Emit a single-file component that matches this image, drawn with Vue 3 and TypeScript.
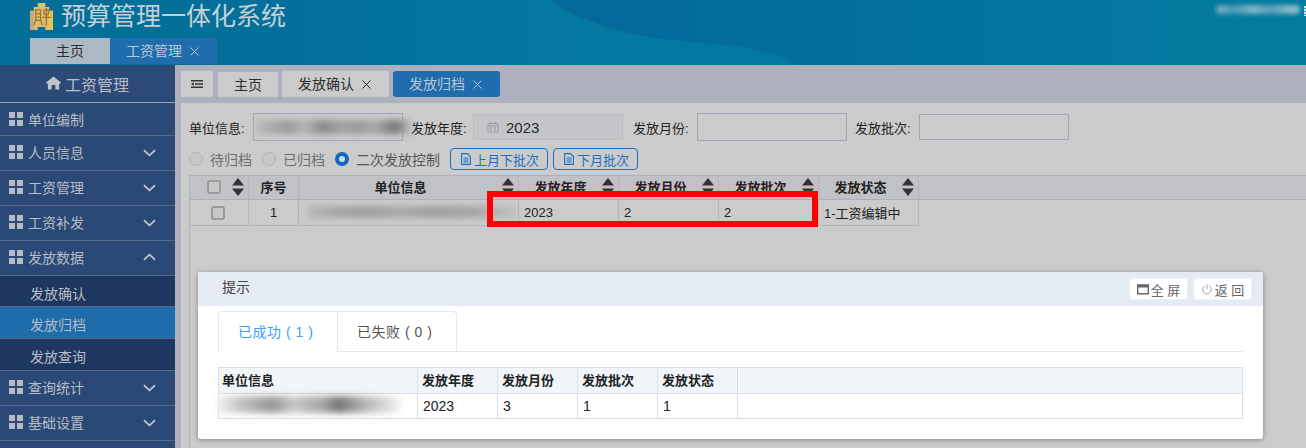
<script setup lang="ts">
const menu = [
  { label: '单位编制', kind: 'first' },
  { label: '人员信息', kind: 'down' },
  { label: '工资管理', kind: 'down' },
  { label: '工资补发', kind: 'down' },
  { label: '发放数据', kind: 'up' },
  { label: '发放确认', kind: 'sub sub1' },
  { label: '发放归档', kind: 'sub active' },
  { label: '发放查询', kind: 'sub' },
  { label: '查询统计', kind: 'down' },
  { label: '基础设置', kind: 'down' },
  { label: '', kind: 'tail' }
]
const heads = [
  { t: '单位信息', w: 220 },
  { t: '发放年度', w: 100 },
  { t: '发放月份', w: 100 },
  { t: '发放批次', w: 100 },
  { t: '发放状态', w: 100 }
]
const cells = [
  { t: '2023', w: 100 },
  { t: '2', w: 100 },
  { t: '2', w: 100 },
  { t: '1-工资编辑中', w: 100 }
]
const sub = [
  { h: '单位信息', v: '', w: 199 },
  { h: '发放年度', v: '2023', w: 80 },
  { h: '发放月份', v: '3', w: 80 },
  { h: '发放批次', v: '1', w: 80 },
  { h: '发放状态', v: '1', w: 80 }
]
</script>

<template>
  <div class="page">
    <header class="top">
      <svg class="wave" viewBox="0 0 1306 65" preserveAspectRatio="none" aria-hidden="true">
        <defs>
          <linearGradient id="dk" x1="0" x2="1" y1="0" y2="0">
            <stop offset="0" stop-color="#02689a" />
            <stop offset="1" stop-color="#047c9f" />
          </linearGradient>
        </defs>
        <path d="M550 0C590 28 640 38 700 43C745 46 775 52 795 65H1306V0Z" fill="url(#dk)" />
      </svg>
      <div class="brand">
        <svg class="logo" viewBox="0 0 24 29" aria-hidden="true">
          <path d="M0 8H4V4H8V0H16V4H20V8H24V28H16V25H8V28H0Z" fill="#d8bf72" />
          <path d="M0 8H4V28H0Z" fill="#c2ad78" />
          <path d="M19 8H24V28H19Z" fill="#e8c34e" />
          <path d="M6 7H11V18H6ZM6 11H11M6 14.500H11M6 18L4 23M11 18L13 23M17 5V24M13 15H22" fill="none" stroke="#a8702a" stroke-width="1.300" />
          <circle cx="17" cy="9.500" r="2.600" fill="none" stroke="#a8702a" stroke-width="1.300" />
        </svg>
        <h1>预算管理一体化系统</h1>
      </div>
      <div class="user-blur"></div>
      <div class="edge-mark"></div>
      <nav class="top-tabs">
        <span class="top-tab">主页</span>
        <span class="top-tab on">工资管理
          <svg class="x" viewBox="0 0 9 9" aria-hidden="true"><path d="M.5.500L8.500 8.500M8.500.500L.5 8.500" stroke="currentColor" fill="none" /></svg>
        </span>
      </nav>
    </header>

    <div class="body">
      <aside class="side">
        <div class="side-title">
          <svg class="home" viewBox="0 0 16 14" aria-hidden="true">
            <path d="M8 0L16 6.500L15 8L14 7.200V14H10V9H6V14H2V7.200L1 8L0 6.500Z" fill="#c0c4cb" />
          </svg>
          工资管理
        </div>
        <div v-for="m in menu" :key="m.label" class="item" :class="m.kind">
          <template v-if="m.kind !== 'tail'">
            <span v-if="!m.kind.startsWith('sub')" class="grid-ic"><b></b><b></b><b></b><b></b></span>
            <span>{{ m.label }}</span>
            <svg v-if="m.kind === 'down' || m.kind === 'up'" class="chev" :class="m.kind" viewBox="0 0 14 8" aria-hidden="true">
              <path d="M1 1L7 6.500L13 1" fill="none" stroke="#bcc1c9" stroke-width="2" />
            </svg>
          </template>
        </div>
      </aside>

      <main class="main">
        <div class="tabs">
          <span class="menu-btn">
            <svg viewBox="0 0 12 8" aria-hidden="true">
              <path d="M0 .75H12M4 4H12M0 7.250H12" stroke="#333" stroke-width="1.400" fill="none" />
              <path d="M0 4L2.800 2.300V5.700Z" fill="#333" />
            </svg>
          </span>
          <span class="tab home-tab">主页</span>
          <span class="tab wide">发放确认
            <svg class="x" viewBox="0 0 9 9" aria-hidden="true"><path d="M.5.500L8.500 8.500M8.500.500L.5 8.500" stroke="currentColor" fill="none" /></svg>
          </span>
          <span class="tab wide on">发放归档
            <svg class="x" viewBox="0 0 9 9" aria-hidden="true"><path d="M.5.500L8.500 8.500M8.500.500L.5 8.500" stroke="currentColor" fill="none" /></svg>
          </span>
        </div>

        <section class="panel">
          <div class="form">
            <label class="lb">单位信息:</label>
            <span class="input tall"><span class="smear s1"></span></span>
            <label class="lb year">发放年度:</label>
            <span class="input date">
              <svg viewBox="0 0 12 12" aria-hidden="true">
                <path d="M1 2.500H11V11H1ZM1 5H11M3.500 1V3M8.500 1V3M3 7H5M7 7H9M3 9H5M7 9H9" fill="none" stroke="#9a9ca3" stroke-width="1" />
              </svg>
              2023
            </span>
            <label class="lb month">发放月份:</label>
            <span class="input tall"></span>
            <label class="lb batch">发放批次:</label>
            <span class="input"></span>
          </div>

          <div class="radios">
            <span class="radio"></span><span class="r-txt">待归档</span>
            <span class="radio"></span><span class="r-txt">已归档</span>
            <span class="radio checked"></span><span class="r-txt last">二次发放控制</span>
            <button class="blue-btn">
              <svg viewBox="0 0 10 12" aria-hidden="true">
                <path d="M.6.600H6.500L9.400 3.500V11.400H.6ZM2.500 5H7.500M2.500 7H7.500M2.500 9H7.500" fill="none" stroke="#1b6fc0" stroke-width="1.100" />
              </svg>
              上月下批次
            </button>
            <button class="blue-btn">
              <svg viewBox="0 0 10 12" aria-hidden="true">
                <path d="M.6.600H6.500L9.400 3.500V11.400H.6ZM2.500 5H7.500M2.500 7H7.500M2.500 9H7.500" fill="none" stroke="#1b6fc0" stroke-width="1.100" />
              </svg>
              下月批次
            </button>
          </div>

          <div class="grid">
            <div class="g-head">
              <div class="g-cell check-col">
                <span class="cb"></span>
                <svg class="sort first" viewBox="0 0 14 18" aria-hidden="true"><path d="M7 0L13 7.500H1ZM7 18L13 10.500H1Z" fill="#333" /></svg>
              </div>
              <div class="g-cell num-col">序号</div>
              <div v-for="h in heads" :key="h.t" class="g-cell th" :style="{ width: h.w + 'px' }">
                {{ h.t }}
                <svg class="sort" viewBox="0 0 14 18" aria-hidden="true"><path d="M7 0L13 7.500H1ZM7 18L13 10.500H1Z" fill="#333" /></svg>
              </div>
            </div>
            <div class="g-row">
              <div class="g-cell check-col plain"><span class="cb"></span></div>
              <div class="g-cell num-col plain">1</div>
              <div class="g-cell name-col"><span class="smear s2"></span></div>
              <div v-for="(c, i) in cells" :key="i" class="g-cell td" :style="{ width: c.w + 'px' }">{{ c.t }}</div>
            </div>
          </div>
        </section>
      </main>
    </div>

    <div class="red-box"></div>

    <div class="dialog">
      <div class="d-head">
        <span class="d-title">提示</span>
        <div class="d-actions">
          <button class="d-btn">
            <svg viewBox="0 0 12 10" aria-hidden="true"><path d="M.7.700H11.300V9.300H.7Z" fill="none" stroke="#666" stroke-width="1.400" /><path d="M0 0H12V3H0Z" fill="#666" /></svg>
            全 屏
          </button>
          <button class="d-btn">
            <svg viewBox="0 0 12 12" aria-hidden="true"><path d="M3.500 2.200A4.700 4.700 0 1 0 8.500 2.200M6 .5V5.500" fill="none" stroke="#999" stroke-width="1" /></svg>
            返 回
          </button>
        </div>
      </div>
      <div class="d-body">
        <div class="d-tabs">
          <span class="d-tab on">已成功 ( 1 )</span>
          <span class="d-tab">已失败 ( 0 )</span>
        </div>
        <div class="d-table">
          <div class="dt-row dt-h">
            <span v-for="c in sub" :key="c.h" class="dt-c" :style="{ width: c.w + 'px' }">{{ c.h }}</span>
          </div>
          <div class="dt-row dt-b">
            <span v-for="c in sub" :key="c.h" class="dt-c" :style="{ width: c.w + 'px' }">
              <span v-if="!c.v" class="smear s3"></span>{{ c.v }}
            </span>
          </div>
        </div>
      </div>
    </div>
  </div>
</template>

<style>
html, body { margin: 0; background: #cbcbcb; overflow: hidden; }
</style>

<style scoped>
.page {
  position: relative;
  width: 1306px;
  height: 448px;
  overflow: hidden;
  font-family: "Liberation Sans", "Noto Sans CJK SC", sans-serif;
  font-size: 13px;
  color: #222;
}
.top {
  position: relative;
  height: 65px;
  background: linear-gradient(90deg, #036f98 0, #03709b 300px, #04799f 600px);
  display: flex;
  flex-direction: column;
  justify-content: space-between;
  box-sizing: border-box;
  padding: 2px 0 1px 30px;
}
.wave { position: absolute; inset: 0; width: 100%; height: 100%; }
.brand { position: relative; display: flex; align-items: center; height: 29px; gap: 8px; }
.logo { width: 23px; height: 28px; }
.brand h1 {
  margin: 0;
  font-size: 25px;
  line-height: 29px;
  font-weight: 400;
  color: #c5d0d6;
}
.user-blur {
  position: absolute;
  top: 5px;
  right: 6px;
  width: 84px;
  height: 9px;
  border-radius: 5px;
  background: linear-gradient(90deg, #7fb3c5, #4a9ab5 20%, #7fb3c5 45%, #559fb8 65%, #8dbbc9 90%);
  filter: blur(2px);
}
.edge-mark {
  position: absolute;
  top: 6px;
  right: 0;
  width: 2px;
  height: 10px;
  background: repeating-linear-gradient(180deg, #d8e2e6 0 2px, #4a94ad 2px 3px);
}
.top-tabs { position: relative; display: flex; height: 26px; }
.top-tab {
  width: 80px;
  background: #adb8c5;
  color: #2f2f2f;
  font-size: 14px;
  line-height: 26px;
  text-align: center;
}
.top-tab.on {
  width: 107px;
  box-sizing: border-box;
  padding-left: 16px;
  display: flex;
  align-items: center;
  gap: 8px;
  background: #206dae;
  color: #b9c5d4;
  border-radius: 0 3px 0 0;
}
.x { width: 9px; height: 9px; flex: none; }
.body { display: flex; height: 383px; }
.side { width: 175px; background: #2a4976; flex: none; color: #b7bcc5; font-size: 14px; }
.side-title {
  height: 37px;
  box-sizing: border-box;
  padding-top: 1px;
  display: flex;
  align-items: center;
  justify-content: center;
  gap: 4px;
  font-size: 16px;
  background: #2b4a78;
}
.home { width: 15px; height: 14px; margin-top: -2px; }
.item {
  height: 35px;
  box-sizing: border-box;
  display: flex;
  align-items: center;
  padding: 0 0 2px 9px;
  border-bottom: 1px solid #56698a;
  position: relative;
}
.item.first { height: 34px; padding-bottom: 0; border-top: 1px solid #9da3ae; }
.item.sub { padding: 2px 0 0 30px; background: #1d3761; height: 32px; font-size: 14px; }
.item.sub1 { height: 31px; padding-top: 4px; }
.item.active { background: #1e6ca9; }
.item.tail { height: 10px; border: 0; }
.grid-ic {
  display: grid;
  grid-template-columns: 6px 6px;
  grid-auto-rows: 6px;
  gap: 2px;
  margin-right: 5px;
}
.grid-ic b { background: #b6bac2; display: block; }
.chev { position: absolute; right: 19px; top: 13px; width: 13px; height: 8px; }
.chev.up { transform: rotate(180deg); top: 12px; }
.main { flex: 1; background: #adb0bd; padding-left: 6px; min-width: 0; }
.tabs { height: 38px; display: flex; align-items: center; gap: 4px; color: #2e2e2e; font-size: 14px; }
.menu-btn {
  width: 32px;
  height: 26px;
  margin-right: 1px;
  background: #cbcbcb;
  display: flex;
  align-items: center;
  justify-content: center;
}
.menu-btn svg { width: 12px; height: 8px; }
.tab { height: 26px; line-height: 26px; background: #cbcbcb; text-align: center; }
.home-tab { width: 60px; height: 25px; margin-top: 1px; }
.wide {
  width: 107px;
  box-sizing: border-box;
  padding-left: 16px;
  display: flex;
  align-items: center;
  gap: 8px;
}
.tab.on { background: #206dae; color: #b9c5d4; border-radius: 3px; }
.panel { height: 345px; background: #cbcbcb; padding: 10px 0 0 8px; box-sizing: border-box; position: relative; }
.form { display: flex; align-items: center; height: 28px; }
.lb { width: 64px; flex: none; white-space: nowrap; }
.year { margin-left: 8px; margin-right: -2px; }
.month { margin-left: 10px; }
.batch { margin-left: 8px; }
.input {
  width: 150px;
  height: 26px;
  box-sizing: border-box;
  border: 1px solid #a1a6b8;
  position: relative;
  flex: none;
}
.tall { height: 28px; }
.date {
  background: #c4c5c9;
  border-color: #bcbdc4;
  display: flex;
  align-items: center;
  gap: 7px;
  padding-left: 13px;
  font-size: 15px;
  color: #2c2c2c;
}
.date svg { width: 12px; height: 12px; }
.smear {
  position: absolute;
  display: block;
  background: linear-gradient(90deg, #bbb 0, #a9a9a9 12%, #9a9a9a 22%, #b5b5b5 32%, #888 44%, #a2a2a2 55%, #9b9b9b 66%, #a8a8a8 78%, #777 90%, #b5b5b5 100%);
  filter: blur(3px);
  pointer-events: none;
}
.s1 { left: 1px; top: 6px; width: 155px; height: 14px; }
.s2 {
  left: 8px;
  top: 6px;
  width: 210px;
  height: 12px;
  background: linear-gradient(90deg, #b8b8b8 0, #a6a6a6 15%, #9f9f9f 30%, #ababab 45%, #a0a0a0 60%, #a6a6a6 80%, #c2c2c2 100%);
}
.s3 { left: -2px; top: 2px; width: 184px; height: 17px; background: linear-gradient(90deg, #f4f4f4 0, #c6c6c6 12%, #999 30%, #c8c8c8 42%, #a4a4a4 58%, #777 66%, #b4b4b4 80%, #f4f4f4 100%); }
.radios { display: flex; align-items: center; height: 22px; margin-top: 7px; color: #6e6e6e; font-size: 14px; }
.radio {
  width: 14px;
  height: 14px;
  box-sizing: border-box;
  border-radius: 50%;
  border: 1px solid #b3b3b8;
  background: #c8c8c8;
  margin-right: 7px;
  flex: none;
}
.radio.checked { border: 4.500px solid #0f68c2; background: #d8d8d8; }
.radio.checked + .r-txt { color: #555; }
.r-txt { width: 52px; white-space: nowrap; }
.r-txt.last { width: 94px; }
.blue-btn {
  height: 22px;
  padding: 0 8px 0 10px;
  margin-right: 5px;
  box-sizing: border-box;
  border: 1px solid #1b6fc0;
  border-radius: 4px;
  background: transparent;
  color: #1b6fc0;
  font: inherit;
  font-size: 13px;
  display: flex;
  align-items: center;
  gap: 3px;
}
.blue-btn svg { width: 10px; height: 12px; flex: none; }
.grid { margin-top: 5px; height: 273px; border-left: 1px solid #b2b4c0; border-top: 1px solid #adafba; }
.g-head { display: flex; height: 24px; background: #c1c2c6; border-bottom: 1px solid #adafba; box-sizing: border-box; font-weight: 700; }
.g-row { display: flex; height: 26px; width: 729px; box-sizing: border-box; border-bottom: 1px solid #b2b4c0; }
.g-cell {
  position: relative;
  box-sizing: border-box;
  border-right: 1px solid #b2b4c0;
  display: flex;
  align-items: center;
  justify-content: center;
  flex: none;
}
.check-col { width: 59px; }
.num-col { width: 50px; }
.name-col { width: 220px; }
.plain { font-weight: 400; }
.td { justify-content: flex-start; padding-left: 5px; font-size: 13px; }
.g-head .g-cell { padding-bottom: 2px; }
.th { padding-right: 16px; }
.cb {
  width: 14px;
  height: 14px;
  box-sizing: border-box;
  border: 2px solid #9a9a9a;
  border-radius: 3px;
  background: #c8c8c8;
}
.g-head .cb { margin-right: 10px; }
.g-row .cb { margin-right: 2px; }
.sort { position: absolute; right: 3px; top: 2px; width: 14px; height: 18px; }
.red-box {
  position: absolute;
  left: 487px;
  top: 191px;
  width: 331px;
  height: 36px;
  box-sizing: border-box;
  border: 6px solid #fe0000;
  pointer-events: none;
}
.dialog {
  position: absolute;
  left: 198px;
  top: 272px;
  width: 1065px;
  height: 167px;
  background: #fff;
  border-radius: 3px;
  box-shadow: 0 1px 5px rgba(0, 0, 0, .35);
  overflow: hidden;
}
.d-head {
  height: 34px;
  background: #e4ebf2;
  display: flex;
  align-items: center;
  justify-content: space-between;
  padding: 0 11px 0 24px;
  color: #444;
  font-size: 14px;
}
.d-title { position: relative; top: -3px; }
.d-actions { display: flex; gap: 5px; }
.d-btn {
  width: 59px;
  height: 22px;
  padding: 0;
  box-sizing: border-box;
  border: 1px solid #eef1f5;
  border-radius: 3px;
  background: #fff;
  color: #666;
  font: inherit;
  font-size: 13px;
  display: flex;
  align-items: center;
  justify-content: center;
  gap: 2px;
  white-space: nowrap;
}
.d-btn svg { width: 12px; height: 11px; }
.d-body { padding: 5px 20px 0; }
.d-tabs { display: flex; height: 41px; box-sizing: border-box; border-bottom: 1px solid #e4e7ed; color: #555; font-size: 14px; }
.d-tab {
  width: 119.500px;
  height: 40px;
  line-height: 40px;
  text-align: center;
  letter-spacing: .5px;
  padding-right: 4px;
  box-sizing: border-box;
  border: 1px solid #e4e7ed;
  border-left: 0;
  border-bottom: 0;
  border-radius: 0 4px 0 0;
}
.d-tab.on { color: #409eff; border-left: 1px solid #e4e7ed; border-right: 1px solid #e4e7ed; border-radius: 4px 0 0 0; height: 41px; background: #fff; }
.d-table { margin-top: 15px; border: 1px solid #d8dde9; height: 52px; box-sizing: border-box; }
.dt-row { display: flex; height: 25px; color: #222; font-size: 14px; }
.dt-h { background: #f2f5f8; border-bottom: 1px solid #d8dde9; font-weight: 700; font-size: 13px; }
.dt-c {
  position: relative;
  box-sizing: border-box;
  padding-left: 4px;
  line-height: 25px;
  border-right: 1px solid #d8dde9;
  flex: none;
}
.dt-b .dt-c { padding-left: 5px; }
.dt-c:first-child { padding-left: 3px; }
</style>
